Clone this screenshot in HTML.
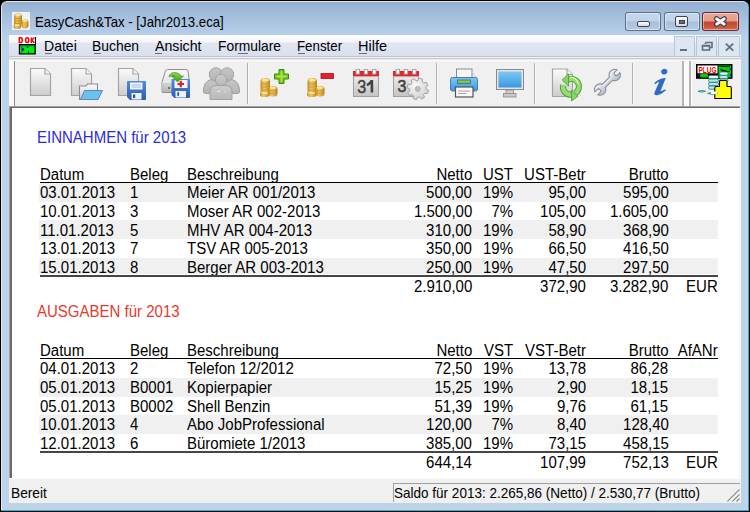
<!DOCTYPE html>
<html><head><meta charset="utf-8">
<style>
html,body{margin:0;padding:0;width:750px;height:512px;overflow:hidden;background:#000;}
body{position:relative;font-family:"Liberation Sans",sans-serif;}
.a{position:absolute;}
.t{position:absolute;white-space:nowrap;line-height:1;}
#teal{position:absolute;left:1px;top:6px;width:748px;height:505px;background:#29b6c9;}
#teal2{position:absolute;left:700px;top:1px;width:49px;height:20px;background:#29b6c9;border-radius:0 6px 0 0;}
#frame{position:absolute;left:1px;top:1px;width:746px;height:508px;border-left:1px solid #e2e9f1;border-top:1px solid #dfe3e8;border-radius:6px 6px 0 0;
 background:linear-gradient(#94b0d1 0px,#a6c0dd 16px,#b6cde7 32px,#bcd3ea 40px,#bcd3ea 100%);}
#menubar{position:absolute;left:9px;top:35px;width:732px;height:21px;background:linear-gradient(#fcfcfe 0,#f4f6fa 7px,#e2e6f2 8px,#dadff0 21px);}
#mbline{position:absolute;left:9px;top:56px;width:732px;height:5px;background:linear-gradient(#bcc2ce 0,#bcc2ce 1px,#f2f2f2 1px,#f2f2f2 2px,#cbcbcb 2px,#cbcbcb 3px,#e6e6e6 3px,#e6e6e6 4px,#fcfcfc 4px);}
#toolbar{position:absolute;left:9px;top:61px;width:732px;height:45px;background:#f0f0f0;}
#tbstrip{position:absolute;left:9px;top:60px;width:5px;height:46px;background:#f9f9f9;}
#grip{position:absolute;left:14px;top:61px;width:1px;height:45px;background:#8a8a8a;}
#content{position:absolute;left:9px;top:106px;width:729px;height:372px;background:#fff;border-left:1px solid #a0a0a0;border-top:1px solid #a0a0a0;border-right:2px solid #f7f7f7;}
#content2{position:absolute;left:10px;top:107px;width:728px;height:371px;border-left:2px solid #6a6a6a;border-top:1px solid #6a6a6a;}
#status{position:absolute;left:9px;top:478px;width:732px;height:24px;background:#f0f0f0;border-top:1px solid #fbfbfb;}
#pane{position:absolute;left:393px;top:483px;width:346px;height:18px;border-left:1px solid #a0a0a0;border-top:1px solid #a0a0a0;}
.sep{position:absolute;top:63px;width:1px;height:41px;background:#b0b0b0;border-right:1px solid #f9f9f9;}
.ln{position:absolute;left:40px;width:678px;height:1px;background:#000;}
.sh{position:absolute;left:39px;width:679px;background:#f0f0f0;}
.cb{position:absolute;top:12px;height:17px;border:1px solid rgba(60,80,110,0.75);border-radius:3px;box-shadow:inset 0 0 0 1px rgba(255,255,255,0.45);
 background:linear-gradient(#c6d7eb 0,#bfd2e8 8px,#a8c0dc 9px,#b4cae4 17px);}
.mdib{position:absolute;top:36px;width:19px;height:19px;border:1px solid #b8c6d6;background:#dde7f3;}
.ui{font-size:13.4px;color:#000;}
</style></head><body>
<div id="teal"></div>
<div id="teal2"></div>
<div id="frame"></div>
<div id="menubar"></div>
<div id="mbline"></div>
<div id="toolbar"></div>
<div id="tbstrip"></div>
<div id="grip"></div>
<div class="sep" style="left:247px"></div>
<div class="sep" style="left:436px"></div>
<div class="sep" style="left:534px"></div>
<div class="sep" style="left:632px"></div>
<div class="a" style="left:682px;top:61px;width:2px;height:45px;background:#b4b4b4;"></div>
<div class="a" style="left:684px;top:61px;width:5px;height:45px;background:#fafafa;"></div>
<div class="a" style="left:689px;top:61px;width:2px;height:45px;background:#b4b4b4;"></div>
<div class="a" style="left:691px;top:61px;width:1px;height:45px;background:#fdfdfd;"></div>
<div id="content"></div>
<div id="content2"></div>
<div id="status"></div>
<div id="pane"></div>
<!-- caption buttons -->
<div class="cb" style="left:625px;width:34px;"></div>
<div class="cb" style="left:664px;width:34px;"></div>
<div class="cb" style="left:702px;width:35px;border-color:rgba(90,30,40,0.9);background:linear-gradient(#eba898 0,#e49a88 8px,#c4452a 9px,#d4664c 17px);"></div>
<div class="a" style="left:637px;top:21px;width:11px;height:4px;background:linear-gradient(#fff,#d8d8d8);border:1px solid #3a4555;border-radius:2px;"></div>
<div class="a" style="left:675px;top:16px;width:11px;height:9px;background:linear-gradient(#fff,#d8d8d8);border:1px solid #3a4555;border-radius:2px;"></div>
<div class="a" style="left:679px;top:20px;width:4px;height:2px;background:#5a7090;border:1px solid #3a4555;"></div>
<svg class="a" style="left:700px;top:10px" width="40" height="24" viewBox="700 10 40 24">
<path d="M716.6 18.8 L724.2 24.2 M724.2 18.8 L716.6 24.2" stroke="#3a3a48" stroke-width="5.2" stroke-linecap="round"/>
<path d="M716.6 18.8 L724.2 24.2 M724.2 18.8 L716.6 24.2" stroke="#f2f2f2" stroke-width="3" stroke-linecap="round"/>
</svg>
<!-- MDI buttons -->
<div class="mdib" style="left:674px;"></div>
<div class="mdib" style="left:696px;"></div>
<div class="mdib" style="left:718px;width:20px;"></div>
<div class="a" style="left:680px;top:49px;width:7px;height:2px;background:#66707c;"></div>
<svg class="a" style="left:700px;top:40px" width="14" height="12" viewBox="0 0 14 12">
<path d="M5.5 2.5 h6.5 v5 h-2 M5.5 4 V2.5" stroke="#66707c" stroke-width="1.6" fill="none"/>
<rect x="2.5" y="5.5" width="7" height="4.5" stroke="#66707c" stroke-width="1.6" fill="none"/>
<rect x="2.5" y="5" width="7" height="1.8" fill="#66707c"/>
</svg>
<svg class="a" style="left:724px;top:42px" width="12" height="10" viewBox="0 0 12 10">
<path d="M1.8 1.6 L9.2 8.6 M9.2 1.6 L1.8 8.6" stroke="#66707c" stroke-width="1.9"/>
</svg>
<div class="a" style="left:45px;top:53px;width:7px;height:1px;background:#6d6d6d"></div>
<div class="a" style="left:94px;top:53px;width:7px;height:1px;background:#6d6d6d"></div>
<div class="a" style="left:155px;top:53px;width:7px;height:1px;background:#6d6d6d"></div>
<div class="a" style="left:238px;top:53px;width:10px;height:1px;background:#6d6d6d"></div>
<div class="a" style="left:298px;top:53px;width:7px;height:1px;background:#6d6d6d"></div>
<div class="a" style="left:359px;top:53px;width:8px;height:1px;background:#6d6d6d"></div>
<div class="t" style="left:35.15px;top:14px;font-size:15.55px;color:#000;transform:scaleX(0.85);transform-origin:0 0;">EasyCash&amp;Tax - [Jahr2013.eca]</div>
<div class="t" style="left:44.03px;top:39px;font-size:14.5px;color:#000;transform:scaleX(0.9688);transform-origin:0 0;">Datei</div>
<div class="t" style="left:92.04px;top:39px;font-size:14.5px;color:#000;transform:scaleX(0.9574);transform-origin:0 0;">Buchen</div>
<div class="t" style="left:155.0px;top:39px;font-size:14.5px;color:#000;transform:scaleX(0.9787);transform-origin:0 0;">Ansicht</div>
<div class="t" style="left:218.05px;top:39px;font-size:14.5px;color:#000;transform:scaleX(0.9538);transform-origin:0 0;">Formulare</div>
<div class="t" style="left:297.08px;top:39px;font-size:14.5px;color:#000;transform:scaleX(0.9167);transform-origin:0 0;">Fenster</div>
<div class="t" style="left:358.0px;top:39px;font-size:14.5px;color:#000;transform:scaleX(1.0);transform-origin:0 0;">Hilfe</div>
<div class="t" style="left:11.05px;top:486px;font-size:14.5px;color:#000;transform:scaleX(0.9459);transform-origin:0 0;">Bereit</div>
<div class="t" style="left:394.07px;top:486px;font-size:14.5px;color:#000;transform:scaleX(0.9325);transform-origin:0 0;">Saldo für 2013: 2.265,86 (Netto) / 2.530,77 (Brutto)</div>
<div class="t" style="left:37px;top:130.46px;font-size:16px;color:#2b2be0;transform:scaleX(0.9375);transform-origin:0 0;">EINNAHMEN für 2013</div>
<div class="t" style="left:40px;top:167.46px;font-size:16px;color:#000;transform:scaleX(0.9375);transform-origin:0 0;">Datum</div>
<div class="t" style="left:130px;top:167.46px;font-size:16px;color:#000;transform:scaleX(0.9375);transform-origin:0 0;">Beleg</div>
<div class="t" style="left:187px;top:167.46px;font-size:16px;color:#000;transform:scaleX(0.9375);transform-origin:0 0;">Beschreibung</div>
<div class="t" style="right:278px;top:167.46px;font-size:16px;color:#000;text-align:right;transform:scaleX(0.9375);transform-origin:100% 0;">Netto</div>
<div class="t" style="right:237px;top:167.46px;font-size:16px;color:#000;text-align:right;transform:scaleX(0.9375);transform-origin:100% 0;">UST</div>
<div class="t" style="right:164px;top:167.46px;font-size:16px;color:#000;text-align:right;transform:scaleX(0.9375);transform-origin:100% 0;">UST-Betr</div>
<div class="t" style="right:81.5px;top:167.46px;font-size:16px;color:#000;text-align:right;transform:scaleX(0.9375);transform-origin:100% 0;">Brutto</div>
<div class="ln" style="top:182px"></div>
<div class="sh" style="top:183px;height:19px"></div>
<div class="t" style="left:40px;top:185.46px;font-size:16px;color:#000;transform:scaleX(0.9375);transform-origin:0 0;">03.01.2013</div>
<div class="t" style="left:130px;top:185.46px;font-size:16px;color:#000;transform:scaleX(0.9375);transform-origin:0 0;">1</div>
<div class="t" style="left:187px;top:185.46px;font-size:16px;color:#000;transform:scaleX(0.9375);transform-origin:0 0;">Meier AR 001/2013</div>
<div class="t" style="right:278px;top:185.46px;font-size:16px;color:#000;text-align:right;transform:scaleX(0.9375);transform-origin:100% 0;">500,00</div>
<div class="t" style="right:237px;top:185.46px;font-size:16px;color:#000;text-align:right;transform:scaleX(0.9375);transform-origin:100% 0;">19%</div>
<div class="t" style="right:164px;top:185.46px;font-size:16px;color:#000;text-align:right;transform:scaleX(0.9375);transform-origin:100% 0;">95,00</div>
<div class="t" style="right:81.5px;top:185.46px;font-size:16px;color:#000;text-align:right;transform:scaleX(0.9375);transform-origin:100% 0;">595,00</div>
<div class="t" style="left:40px;top:204.46px;font-size:16px;color:#000;transform:scaleX(0.9375);transform-origin:0 0;">10.01.2013</div>
<div class="t" style="left:130px;top:204.46px;font-size:16px;color:#000;transform:scaleX(0.9375);transform-origin:0 0;">3</div>
<div class="t" style="left:187px;top:204.46px;font-size:16px;color:#000;transform:scaleX(0.9375);transform-origin:0 0;">Moser AR 002-2013</div>
<div class="t" style="right:278px;top:204.46px;font-size:16px;color:#000;text-align:right;transform:scaleX(0.9375);transform-origin:100% 0;">1.500,00</div>
<div class="t" style="right:237px;top:204.46px;font-size:16px;color:#000;text-align:right;transform:scaleX(0.9375);transform-origin:100% 0;">7%</div>
<div class="t" style="right:164px;top:204.46px;font-size:16px;color:#000;text-align:right;transform:scaleX(0.9375);transform-origin:100% 0;">105,00</div>
<div class="t" style="right:81.5px;top:204.46px;font-size:16px;color:#000;text-align:right;transform:scaleX(0.9375);transform-origin:100% 0;">1.605,00</div>
<div class="sh" style="top:220px;height:19px"></div>
<div class="t" style="left:40px;top:223.46px;font-size:16px;color:#000;transform:scaleX(0.9375);transform-origin:0 0;">11.01.2013</div>
<div class="t" style="left:130px;top:223.46px;font-size:16px;color:#000;transform:scaleX(0.9375);transform-origin:0 0;">5</div>
<div class="t" style="left:187px;top:223.46px;font-size:16px;color:#000;transform:scaleX(0.9375);transform-origin:0 0;">MHV AR 004-2013</div>
<div class="t" style="right:278px;top:223.46px;font-size:16px;color:#000;text-align:right;transform:scaleX(0.9375);transform-origin:100% 0;">310,00</div>
<div class="t" style="right:237px;top:223.46px;font-size:16px;color:#000;text-align:right;transform:scaleX(0.9375);transform-origin:100% 0;">19%</div>
<div class="t" style="right:164px;top:223.46px;font-size:16px;color:#000;text-align:right;transform:scaleX(0.9375);transform-origin:100% 0;">58,90</div>
<div class="t" style="right:81.5px;top:223.46px;font-size:16px;color:#000;text-align:right;transform:scaleX(0.9375);transform-origin:100% 0;">368,90</div>
<div class="t" style="left:40px;top:241.46px;font-size:16px;color:#000;transform:scaleX(0.9375);transform-origin:0 0;">13.01.2013</div>
<div class="t" style="left:130px;top:241.46px;font-size:16px;color:#000;transform:scaleX(0.9375);transform-origin:0 0;">7</div>
<div class="t" style="left:187px;top:241.46px;font-size:16px;color:#000;transform:scaleX(0.9375);transform-origin:0 0;">TSV AR 005-2013</div>
<div class="t" style="right:278px;top:241.46px;font-size:16px;color:#000;text-align:right;transform:scaleX(0.9375);transform-origin:100% 0;">350,00</div>
<div class="t" style="right:237px;top:241.46px;font-size:16px;color:#000;text-align:right;transform:scaleX(0.9375);transform-origin:100% 0;">19%</div>
<div class="t" style="right:164px;top:241.46px;font-size:16px;color:#000;text-align:right;transform:scaleX(0.9375);transform-origin:100% 0;">66,50</div>
<div class="t" style="right:81.5px;top:241.46px;font-size:16px;color:#000;text-align:right;transform:scaleX(0.9375);transform-origin:100% 0;">416,50</div>
<div class="sh" style="top:258px;height:16px"></div>
<div class="t" style="left:40px;top:260.46px;font-size:16px;color:#000;transform:scaleX(0.9375);transform-origin:0 0;">15.01.2013</div>
<div class="t" style="left:130px;top:260.46px;font-size:16px;color:#000;transform:scaleX(0.9375);transform-origin:0 0;">8</div>
<div class="t" style="left:187px;top:260.46px;font-size:16px;color:#000;transform:scaleX(0.9375);transform-origin:0 0;">Berger AR 003-2013</div>
<div class="t" style="right:278px;top:260.46px;font-size:16px;color:#000;text-align:right;transform:scaleX(0.9375);transform-origin:100% 0;">250,00</div>
<div class="t" style="right:237px;top:260.46px;font-size:16px;color:#000;text-align:right;transform:scaleX(0.9375);transform-origin:100% 0;">19%</div>
<div class="t" style="right:164px;top:260.46px;font-size:16px;color:#000;text-align:right;transform:scaleX(0.9375);transform-origin:100% 0;">47,50</div>
<div class="t" style="right:81.5px;top:260.46px;font-size:16px;color:#000;text-align:right;transform:scaleX(0.9375);transform-origin:100% 0;">297,50</div>
<div class="ln" style="top:275px;height:2px;background:#454545"></div>
<div class="t" style="right:278px;top:279.46px;font-size:16px;color:#000;text-align:right;transform:scaleX(0.9375);transform-origin:100% 0;">2.910,00</div>
<div class="t" style="right:164px;top:279.46px;font-size:16px;color:#000;text-align:right;transform:scaleX(0.9375);transform-origin:100% 0;">372,90</div>
<div class="t" style="right:81.5px;top:279.46px;font-size:16px;color:#000;text-align:right;transform:scaleX(0.9375);transform-origin:100% 0;">3.282,90</div>
<div class="t" style="right:32px;top:279.46px;font-size:16px;color:#000;text-align:right;transform:scaleX(0.9375);transform-origin:100% 0;">EUR</div>
<div class="t" style="left:37px;top:304.46px;font-size:16px;color:#e63a2a;transform:scaleX(0.9375);transform-origin:0 0;">AUSGABEN für 2013</div>
<div class="t" style="left:40px;top:343.46px;font-size:16px;color:#000;transform:scaleX(0.9375);transform-origin:0 0;">Datum</div>
<div class="t" style="left:130px;top:343.46px;font-size:16px;color:#000;transform:scaleX(0.9375);transform-origin:0 0;">Beleg</div>
<div class="t" style="left:187px;top:343.46px;font-size:16px;color:#000;transform:scaleX(0.9375);transform-origin:0 0;">Beschreibung</div>
<div class="t" style="right:278px;top:343.46px;font-size:16px;color:#000;text-align:right;transform:scaleX(0.9375);transform-origin:100% 0;">Netto</div>
<div class="t" style="right:237px;top:343.46px;font-size:16px;color:#000;text-align:right;transform:scaleX(0.9375);transform-origin:100% 0;">VST</div>
<div class="t" style="right:164px;top:343.46px;font-size:16px;color:#000;text-align:right;transform:scaleX(0.9375);transform-origin:100% 0;">VST-Betr</div>
<div class="t" style="right:81.5px;top:343.46px;font-size:16px;color:#000;text-align:right;transform:scaleX(0.9375);transform-origin:100% 0;">Brutto</div>
<div class="t" style="right:32px;top:343.46px;font-size:16px;color:#000;text-align:right;transform:scaleX(0.9375);transform-origin:100% 0;">AfANr</div>
<div class="ln" style="top:358px"></div>
<div class="t" style="left:40px;top:361.46px;font-size:16px;color:#000;transform:scaleX(0.9375);transform-origin:0 0;">04.01.2013</div>
<div class="t" style="left:130px;top:361.46px;font-size:16px;color:#000;transform:scaleX(0.9375);transform-origin:0 0;">2</div>
<div class="t" style="left:187px;top:361.46px;font-size:16px;color:#000;transform:scaleX(0.9375);transform-origin:0 0;">Telefon 12/2012</div>
<div class="t" style="right:278px;top:361.46px;font-size:16px;color:#000;text-align:right;transform:scaleX(0.9375);transform-origin:100% 0;">72,50</div>
<div class="t" style="right:237px;top:361.46px;font-size:16px;color:#000;text-align:right;transform:scaleX(0.9375);transform-origin:100% 0;">19%</div>
<div class="t" style="right:164px;top:361.46px;font-size:16px;color:#000;text-align:right;transform:scaleX(0.9375);transform-origin:100% 0;">13,78</div>
<div class="t" style="right:81.5px;top:361.46px;font-size:16px;color:#000;text-align:right;transform:scaleX(0.9375);transform-origin:100% 0;">86,28</div>
<div class="sh" style="top:378px;height:19px"></div>
<div class="t" style="left:40px;top:380.46px;font-size:16px;color:#000;transform:scaleX(0.9375);transform-origin:0 0;">05.01.2013</div>
<div class="t" style="left:130px;top:380.46px;font-size:16px;color:#000;transform:scaleX(0.9375);transform-origin:0 0;">B0001</div>
<div class="t" style="left:187px;top:380.46px;font-size:16px;color:#000;transform:scaleX(0.9375);transform-origin:0 0;">Kopierpapier</div>
<div class="t" style="right:278px;top:380.46px;font-size:16px;color:#000;text-align:right;transform:scaleX(0.9375);transform-origin:100% 0;">15,25</div>
<div class="t" style="right:237px;top:380.46px;font-size:16px;color:#000;text-align:right;transform:scaleX(0.9375);transform-origin:100% 0;">19%</div>
<div class="t" style="right:164px;top:380.46px;font-size:16px;color:#000;text-align:right;transform:scaleX(0.9375);transform-origin:100% 0;">2,90</div>
<div class="t" style="right:81.5px;top:380.46px;font-size:16px;color:#000;text-align:right;transform:scaleX(0.9375);transform-origin:100% 0;">18,15</div>
<div class="t" style="left:40px;top:399.46px;font-size:16px;color:#000;transform:scaleX(0.9375);transform-origin:0 0;">05.01.2013</div>
<div class="t" style="left:130px;top:399.46px;font-size:16px;color:#000;transform:scaleX(0.9375);transform-origin:0 0;">B0002</div>
<div class="t" style="left:187px;top:399.46px;font-size:16px;color:#000;transform:scaleX(0.9375);transform-origin:0 0;">Shell Benzin</div>
<div class="t" style="right:278px;top:399.46px;font-size:16px;color:#000;text-align:right;transform:scaleX(0.9375);transform-origin:100% 0;">51,39</div>
<div class="t" style="right:237px;top:399.46px;font-size:16px;color:#000;text-align:right;transform:scaleX(0.9375);transform-origin:100% 0;">19%</div>
<div class="t" style="right:164px;top:399.46px;font-size:16px;color:#000;text-align:right;transform:scaleX(0.9375);transform-origin:100% 0;">9,76</div>
<div class="t" style="right:81.5px;top:399.46px;font-size:16px;color:#000;text-align:right;transform:scaleX(0.9375);transform-origin:100% 0;">61,15</div>
<div class="sh" style="top:415px;height:19px"></div>
<div class="t" style="left:40px;top:417.46px;font-size:16px;color:#000;transform:scaleX(0.9375);transform-origin:0 0;">10.01.2013</div>
<div class="t" style="left:130px;top:417.46px;font-size:16px;color:#000;transform:scaleX(0.9375);transform-origin:0 0;">4</div>
<div class="t" style="left:187px;top:417.46px;font-size:16px;color:#000;transform:scaleX(0.9375);transform-origin:0 0;">Abo JobProfessional</div>
<div class="t" style="right:278px;top:417.46px;font-size:16px;color:#000;text-align:right;transform:scaleX(0.9375);transform-origin:100% 0;">120,00</div>
<div class="t" style="right:237px;top:417.46px;font-size:16px;color:#000;text-align:right;transform:scaleX(0.9375);transform-origin:100% 0;">7%</div>
<div class="t" style="right:164px;top:417.46px;font-size:16px;color:#000;text-align:right;transform:scaleX(0.9375);transform-origin:100% 0;">8,40</div>
<div class="t" style="right:81.5px;top:417.46px;font-size:16px;color:#000;text-align:right;transform:scaleX(0.9375);transform-origin:100% 0;">128,40</div>
<div class="t" style="left:40px;top:436.46px;font-size:16px;color:#000;transform:scaleX(0.9375);transform-origin:0 0;">12.01.2013</div>
<div class="t" style="left:130px;top:436.46px;font-size:16px;color:#000;transform:scaleX(0.9375);transform-origin:0 0;">6</div>
<div class="t" style="left:187px;top:436.46px;font-size:16px;color:#000;transform:scaleX(0.9375);transform-origin:0 0;">Büromiete 1/2013</div>
<div class="t" style="right:278px;top:436.46px;font-size:16px;color:#000;text-align:right;transform:scaleX(0.9375);transform-origin:100% 0;">385,00</div>
<div class="t" style="right:237px;top:436.46px;font-size:16px;color:#000;text-align:right;transform:scaleX(0.9375);transform-origin:100% 0;">19%</div>
<div class="t" style="right:164px;top:436.46px;font-size:16px;color:#000;text-align:right;transform:scaleX(0.9375);transform-origin:100% 0;">73,15</div>
<div class="t" style="right:81.5px;top:436.46px;font-size:16px;color:#000;text-align:right;transform:scaleX(0.9375);transform-origin:100% 0;">458,15</div>
<div class="ln" style="top:451px;height:2px;background:#454545"></div>
<div class="t" style="right:278px;top:455.46px;font-size:16px;color:#000;text-align:right;transform:scaleX(0.9375);transform-origin:100% 0;">644,14</div>
<div class="t" style="right:164px;top:455.46px;font-size:16px;color:#000;text-align:right;transform:scaleX(0.9375);transform-origin:100% 0;">107,99</div>
<div class="t" style="right:81.5px;top:455.46px;font-size:16px;color:#000;text-align:right;transform:scaleX(0.9375);transform-origin:100% 0;">752,13</div>
<div class="t" style="right:32px;top:455.46px;font-size:16px;color:#000;text-align:right;transform:scaleX(0.9375);transform-origin:100% 0;">EUR</div>
<svg class="a" style="left:724px;top:486px" width="17" height="17" viewBox="724 486 17 17">
<path d="M727.5 501.5 L739.5 489.5 M732.5 501.5 L739.5 494.5 M736.5 501.5 L739.5 498.5" stroke="#8c8c8c" stroke-width="1.3"/>
<path d="M728.5 502 L740 490.5 M733.5 502 L740 495.5" stroke="#ffffff" stroke-width="0.8"/>
</svg>
<svg class="a" style="left:0;top:0" width="750" height="512" viewBox="0 0 750 512">
<defs>
<linearGradient id="gold" x1="0" x2="1" y1="0" y2="0">
<stop offset="0" stop-color="#c08c22"/><stop offset="0.35" stop-color="#eec462"/><stop offset="0.7" stop-color="#dcaa40"/><stop offset="1" stop-color="#b0801c"/>
</linearGradient>
<linearGradient id="doc" x1="0" x2="0" y1="0" y2="1">
<stop offset="0" stop-color="#fbfbfb"/><stop offset="1" stop-color="#cdcdcd"/>
</linearGradient>
<linearGradient id="blue" x1="0" x2="0" y1="0" y2="1">
<stop offset="0" stop-color="#4f8fdc"/><stop offset="1" stop-color="#2a5cb0"/>
</linearGradient>
<linearGradient id="scr" x1="0" x2="0" y1="0" y2="1">
<stop offset="0" stop-color="#7cc8f4"/><stop offset="1" stop-color="#3b98e0"/>
</linearGradient>
<linearGradient id="grn" x1="0" x2="0" y1="0" y2="1">
<stop offset="0" stop-color="#8ee04a"/><stop offset="1" stop-color="#3c9a1c"/>
</linearGradient>
<linearGradient id="calb" x1="0" x2="0" y1="0" y2="1">
<stop offset="0" stop-color="#f2f2f2"/><stop offset="1" stop-color="#c4c4c4"/>
</linearGradient>
<linearGradient id="gray" x1="0" x2="0" y1="0" y2="1">
<stop offset="0" stop-color="#cfcfcf"/><stop offset="1" stop-color="#a8a8a8"/>
</linearGradient>
<linearGradient id="drv" x1="0" x2="0" y1="0" y2="1"><stop offset="0" stop-color="#fafafa"/><stop offset="1" stop-color="#d4d4d4"/></linearGradient>
<linearGradient id="drv2" x1="0" x2="0" y1="0" y2="1"><stop offset="0" stop-color="#d8d8d8"/><stop offset="1" stop-color="#b4b4b4"/></linearGradient>
<linearGradient id="ppl" x1="0" x2="0" y1="0" y2="1"><stop offset="0" stop-color="#c6c6c6"/><stop offset="1" stop-color="#b4b4b4"/></linearGradient>
<linearGradient id="ppl2" x1="0" x2="0" y1="0" y2="1"><stop offset="0" stop-color="#cdcdcd"/><stop offset="1" stop-color="#b8b8b8"/></linearGradient>
<radialGradient id="gearg" cx="0.4" cy="0.35" r="0.7"><stop offset="0" stop-color="#fafafa"/><stop offset="1" stop-color="#cdcdcd"/></radialGradient>
<linearGradient id="wr" x1="0" x2="0" y1="0" y2="1"><stop offset="0" stop-color="#f0f3f8"/><stop offset="1" stop-color="#b4bcc8"/></linearGradient>
</defs>

<!-- title coins icon -->
<rect x="12" y="12" width="18" height="18" fill="#edf3fb"/>
<g>
<rect x="14" y="13.3" width="8" height="13.5" rx="3.5" fill="url(#gold)"/>
<ellipse cx="18" cy="15" rx="3" ry="1.3" fill="#f8e49a"/>
<path d="M15 18.5h6M15 21h6M15 23.5h6" stroke="#c08a20" stroke-width="0.8"/>
<rect x="13.5" y="24" width="7.5" height="5" rx="2.5" fill="url(#gold)"/>
<ellipse cx="17.2" cy="25.3" rx="2.6" ry="1" fill="#f8e49a"/>
<rect x="21.5" y="19.5" width="7" height="9" rx="3.2" fill="url(#gold)"/>
<ellipse cx="25" cy="21" rx="2.6" ry="1.1" fill="#f8e49a"/>
</g>

<!-- DOK icon -->
<rect x="18" y="36.8" width="17.5" height="7.5" fill="#fff"/>
<g stroke="#ff0000" stroke-width="1.5" fill="none">
<path d="M19.3 37.8 V42.6 H20.8 Q22.3 42.6 22.3 40.2 Q22.3 37.8 20.8 37.8 Z"/>
<ellipse cx="27.2" cy="40.2" rx="1.55" ry="2.4"/>
<path d="M31.3 37.5 V42.9 M34.4 37.5 L31.7 40.2 L34.5 42.9"/>
</g>
<rect x="35" y="37" width="1" height="8" fill="#000"/>
<rect x="18.8" y="44" width="17" height="10.5" fill="#000"/>
<rect x="20" y="45.5" width="14.5" height="7.8" fill="#00f000"/>
<rect x="20" y="45.5" width="14.5" height="0.9" fill="#00806a"/>
<path d="M20.5 46.5 L24.2 49.5 L20.5 52.8" stroke="#005a70" stroke-width="1" fill="none"/>
<circle cx="22.6" cy="49.4" r="1.4" fill="#0010c0"/>
<rect x="26.8" y="46.6" width="1.6" height="1.2" fill="#000"/>
<circle cx="28.5" cy="51.2" r="1" fill="#109090"/>
<rect x="28" y="52.2" width="1" height="1.2" fill="#000"/>

<!-- new doc -->
<path d="M30.5 68.5 H45 L50.5 74 V95.5 H30.5 Z" fill="url(#doc)" stroke="#a4a4a8" stroke-width="1.2"/>
<path d="M45 68.5 V74 H50.5" fill="#f4f4f4" stroke="#a4a4a8" stroke-width="1.2"/>

<!-- open -->
<path d="M71.5 68.5 H86 L91.5 74 V95.5 H71.5 Z" fill="url(#doc)" stroke="#a4a4a8" stroke-width="1.2"/>
<path d="M86 68.5 V74 H91.5" fill="#f4f4f4" stroke="#a4a4a8" stroke-width="1.2"/>
<path d="M79.5 99.5 V86 H86 L87.5 84 H97.5 V99.5 Z" fill="url(#doc)" stroke="#8c8c90" stroke-width="1.1"/>
<path d="M80.5 99.5 L84.5 90.5 H102.5 L98 99.5 Z" fill="#6cc0f0" stroke="#5a8ab8" stroke-width="1"/>

<!-- save -->
<path d="M118.5 68.5 H133 L138.5 74 V95.5 H118.5 Z" fill="url(#doc)" stroke="#a4a4a8" stroke-width="1.2"/>
<path d="M133 68.5 V74 H138.5" fill="#f4f4f4" stroke="#a4a4a8" stroke-width="1.2"/>
<path d="M127 82 Q127 81 128 81 H145 Q146 81 146 82 V99 Q146 100 145 100 H130 L127 97 Z" fill="url(#blue)"/>
<rect x="130" y="82.5" width="12.5" height="7" fill="#f0f4fa"/>
<path d="M131.5 85 H141 M131.5 87 H141" stroke="#9ab8dc" stroke-width="0.9"/>
<rect x="131.5" y="93" width="10" height="6.5" fill="#eef2f8"/>
<rect x="133" y="94.5" width="2.2" height="3.5" fill="#2a50a0"/>

<!-- import -->
<path d="M167.5 69.5 H186 Q187.5 69.5 188 71 L189.5 82 V91.5 Q189.5 92.5 188.5 92.5 H163 Q162 92.5 162 91.5 V82 L165.5 71 Q166 69.5 167.5 69.5 Z" fill="url(#drv)" stroke="#8e8e8e" stroke-width="1"/>
<rect x="162.5" y="82" width="26.5" height="10" fill="url(#drv2)"/>
<path d="M162.5 82 H189" stroke="#f4f4f4" stroke-width="1"/>
<rect x="168" y="87" width="2" height="2" fill="#707070"/>
<path d="M171.5 80 Q171.5 79 172.5 79 H189 Q190 79 190 80 V97 Q190 98 189 98 H174.5 L171.5 95 Z" fill="url(#blue)"/>
<rect x="174.5" y="80" width="13" height="8" fill="#f4f6fa"/>
<path d="M180.8 80.8 V87.2 M177.5 84 H184" stroke="#e02020" stroke-width="2.2"/>
<rect x="175.5" y="91" width="10.5" height="6.5" fill="#eef2f8"/>
<rect x="177.3" y="92.3" width="1.8" height="3.5" fill="#2a50a0"/>
<path d="M169 77 Q169.5 72.5 175 72.5 Q179.5 72.8 181 76 L183.5 76 L177.5 82 L171.5 76 L175.2 76 Q174.2 75.3 172.8 75.6 Q170.5 76 169 77 Z" fill="url(#grn)" stroke="#3a8a1a" stroke-width="0.6"/>

<!-- people -->
<g stroke="#a2a2a2" stroke-width="1">
<path d="M203.5 92.5 Q203 81.5 211 79.5 H232 Q240 81.5 239.5 92.5 Q239 93.5 237 93.5 H206 Q203.5 93.5 203.5 92.5 Z" fill="url(#ppl)"/>
<circle cx="216" cy="74.5" r="6.7" fill="url(#ppl)"/>
<circle cx="227" cy="74.5" r="6.7" fill="url(#ppl)"/>
<path d="M210 99.5 V92 Q210 85.5 216.5 85.5 H225.5 Q232 85.5 232 92 V99.5 Z" fill="url(#ppl2)"/>
<circle cx="221" cy="80" r="5.7" fill="url(#ppl2)"/>
</g>
<path d="M217.5 91.5 H220 M224.5 91.5 H225.5" stroke="#f6f6f6" stroke-width="1"/>

<!-- coins plus -->
<g>
<rect x="260.5" y="78" width="9.5" height="16" rx="4" fill="url(#gold)"/>
<ellipse cx="265.2" cy="80" rx="3.6" ry="1.6" fill="#f8e49a"/>
<path d="M261.5 84h7.5M261.5 87h7.5M261.5 90h7.5" stroke="#c8962a" stroke-width="0.7"/>
<rect x="260" y="91.5" width="9.5" height="5.5" rx="2.7" fill="url(#gold)"/>
<ellipse cx="264.7" cy="93" rx="3.4" ry="1.1" fill="#f8e49a"/>
<rect x="268.5" y="86" width="9" height="10.5" rx="3.5" fill="url(#gold)"/>
<ellipse cx="273" cy="87.8" rx="3.3" ry="1.3" fill="#f8e49a"/>
<path d="M269.5 91h7M269.5 93.5h7" stroke="#c8962a" stroke-width="0.7"/>
</g>
<path d="M279 69.5 H284 V74 H288.5 V79 H284 V83.5 H279 V79 H274.5 V74 H279 Z" fill="#78c81e" stroke="#3a8a10" stroke-width="1"/>
<path d="M281.5 71.5 V81.5 M276.5 76.5 H286.5" stroke="#b4e83c" stroke-width="1.6"/>

<!-- coins minus -->
<g>
<rect x="307.5" y="78" width="9.5" height="16" rx="4" fill="url(#gold)"/>
<ellipse cx="312.2" cy="80" rx="3.6" ry="1.6" fill="#f8e49a"/>
<path d="M308.5 84h7.5M308.5 87h7.5M308.5 90h7.5" stroke="#c8962a" stroke-width="0.7"/>
<rect x="307" y="91.5" width="9.5" height="5.5" rx="2.7" fill="url(#gold)"/>
<ellipse cx="311.7" cy="93" rx="3.4" ry="1.1" fill="#f8e49a"/>
<rect x="315.5" y="86" width="9" height="10.5" rx="3.5" fill="url(#gold)"/>
<ellipse cx="320" cy="87.8" rx="3.3" ry="1.3" fill="#f8e49a"/>
<path d="M316.5 91h7M316.5 93.5h7" stroke="#c8962a" stroke-width="0.7"/>
</g>
<rect x="321" y="73.5" width="12.5" height="5" fill="#e8202a" stroke="#b01018" stroke-width="0.8"/>

<!-- calendar 31 -->
<rect x="353.5" y="71.5" width="25" height="25" fill="url(#calb)" stroke="#a0a0a0" stroke-width="1"/>
<rect x="353" y="71" width="26" height="5.8" fill="#e4262c"/>
<rect x="353" y="76.3" width="26" height="0.8" fill="#c8c8c8"/>
<rect x="356" y="69.5" width="3.6" height="4.6" fill="#f4f4f4" stroke="#9a9a9a" stroke-width="0.8"/>
<rect x="364.2" y="69.5" width="3.6" height="4.6" fill="#f4f4f4" stroke="#9a9a9a" stroke-width="0.8"/>
<rect x="372.4" y="69.5" width="3.6" height="4.6" fill="#f4f4f4" stroke="#9a9a9a" stroke-width="0.8"/>
<text x="357.3" y="92.6" font-family="Liberation Sans" font-size="17.5" fill="#424242" stroke="#424242" stroke-width="0.45" textLength="9" lengthAdjust="spacingAndGlyphs">3</text>
<path d="M370.6 80 H373.2 V92.6 H370.6 V84.2 Q369 85.6 366.8 86.2 V83.8 Q369.4 82.6 370.6 80 Z" fill="#424242"/>

<!-- calendar gear -->
<rect x="393.5" y="71.5" width="25" height="25" fill="url(#calb)" stroke="#a0a0a0" stroke-width="1"/>
<rect x="393" y="71" width="26" height="5.8" fill="#e4262c"/>
<rect x="393" y="76.3" width="26" height="0.8" fill="#c8c8c8"/>
<rect x="396" y="69.5" width="3.6" height="4.6" fill="#f4f4f4" stroke="#9a9a9a" stroke-width="0.8"/>
<rect x="404.2" y="69.5" width="3.6" height="4.6" fill="#f4f4f4" stroke="#9a9a9a" stroke-width="0.8"/>
<rect x="412.4" y="69.5" width="3.6" height="4.6" fill="#f4f4f4" stroke="#9a9a9a" stroke-width="0.8"/>
<text x="397.5" y="92" font-family="Liberation Sans" font-size="16" fill="#404040" stroke="#404040" stroke-width="0.5">3</text>
<path d="M417.80 80.70 L419.07 78.17 L422.48 79.16 L422.19 81.98 L423.60 83.10 L426.28 82.21 L427.99 85.32 L425.80 87.11 L426.00 88.90 L428.53 90.17 L427.54 93.58 L424.72 93.29 L423.60 94.70 L424.49 97.38 L421.38 99.09 L419.59 96.90 L417.80 97.10 L416.53 99.63 L413.12 98.64 L413.41 95.82 L412.00 94.70 L409.32 95.59 L407.61 92.48 L409.80 90.69 L409.60 88.90 L407.07 87.63 L408.06 84.22 L410.88 84.51 L412.00 83.10 L411.11 80.42 L414.22 78.71 L416.01 80.90 Z" fill="url(#gearg)" stroke="#a4a4a4" stroke-width="1"/>
<circle cx="417.8" cy="88.9" r="2.6" fill="#bcbcbc" stroke="#a8a8a8" stroke-width="0.6"/>

<!-- printer -->
<rect x="456.5" y="69" width="15.5" height="9" fill="#f6f6f6" stroke="#8a8a8a" stroke-width="1"/>
<path d="M472 72 L476 77" stroke="#c8c8c8" stroke-width="1"/>
<rect x="450.5" y="77.5" width="27" height="13.5" rx="2" fill="url(#scr)" stroke="#4a7ab0" stroke-width="1"/>
<rect x="457.5" y="80" width="13" height="3.5" fill="#8ac832" stroke="#2f6aa8" stroke-width="0.8"/>
<rect x="455.5" y="87" width="17.5" height="10" fill="#f8f8f8" stroke="#555" stroke-width="1.2"/>
<path d="M458 91 H470 M458 93.5 H466" stroke="#9a9a9a" stroke-width="0.9"/>

<!-- monitor -->
<rect x="496.5" y="69.5" width="27" height="20" fill="#e4e4e4" stroke="#8a8a8a" stroke-width="1"/>
<rect x="498.5" y="71.5" width="23" height="16" fill="url(#scr)"/>
<rect x="506" y="90" width="7.5" height="4" fill="#cfcfcf" stroke="#8a8a8a" stroke-width="0.8"/>
<rect x="503.5" y="93.5" width="12.5" height="3.5" fill="#c8c8c8" stroke="#8a8a8a" stroke-width="0.8"/>

<!-- refresh doc -->
<path d="M552.5 69 H567 L572.5 74.5 V96.5 H552.5 Z" fill="url(#doc)" stroke="#a4a4a8" stroke-width="1.2"/>
<path d="M567 69 V74.5 H572.5" fill="#f4f4f4" stroke="#a4a4a8" stroke-width="1.2"/>
<g fill="none" stroke-linecap="butt">
<path d="M567.5 79.8 A7.6 7.6 0 1 1 575 93.3" stroke="#4aa82c" stroke-width="6.2"/>
<path d="M563.2 85.2 A7.6 7.6 0 0 0 572 94.5" stroke="#4aa82c" stroke-width="6.2"/>
<path d="M567.5 79.8 A7.6 7.6 0 1 1 575 93.3" stroke="#9ad878" stroke-width="4.2"/>
<path d="M563.2 85.2 A7.6 7.6 0 0 0 572 94.5" stroke="#9ad878" stroke-width="4.2"/>
</g>
<path d="M562.3 80 L568.5 73.8 V86.2 Z" fill="#8cd26a" stroke="#4aa82c" stroke-width="0.9"/>
<path d="M578 96.2 L571.5 90.2 V101 Z" fill="#8cd26a" stroke="#4aa82c" stroke-width="0.9"/>
<path d="M570 77 Q576 77 578.5 84" stroke="#d8f4c0" stroke-width="1.2" fill="none"/>

<!-- wrench -->
<g transform="translate(607.4 82.3) rotate(-45) scale(0.94)">
<path d="M5.5 -2.4 A6 6 0 0 1 16.58 -2.2 L13.2 -2.2 A2.2 2.2 0 0 0 13.2 2.2 L16.58 2.2 A6 6 0 0 1 5.5 2.4 L-5.5 2.4 A6 6 0 0 1 -16.58 2.2 L-13.2 2.2 A2.2 2.2 0 0 0 -13.2 -2.2 L-16.58 -2.2 A6 6 0 0 1 -5.5 -2.4 Z" fill="url(#wr)" stroke="#868c96" stroke-width="1.1"/>
<path d="M-6 -0.6 H6" stroke="#f8fafc" stroke-width="1"/>
</g>

<!-- info -->
<ellipse cx="664.3" cy="71.6" rx="3.1" ry="2.8" transform="rotate(-20 664.3 71.6)" fill="#2f6ac4"/>
<path d="M654.3 83 Q656.5 80.5 661 78.8 Q663.5 77.9 665.8 78 L660.3 91.3 Q662.8 90.6 665.5 89.2 L665.9 90.6 Q661.5 94.5 657 95.2 Q654.5 95.5 654.3 93.8 Q654.3 93 654.8 91.8 L659.3 81.8 Q657 82.6 655 84.2 Z" fill="#2f6ac4"/>

<!-- plug -->
<rect x="696" y="64" width="36.5" height="14.8" fill="#000"/>
<rect x="697.5" y="65.5" width="20" height="7.8" fill="#fff"/>
<text x="707.5" y="72.6" font-family="Liberation Sans" font-weight="bold" font-size="8.6" fill="#ff0000" text-anchor="middle" textLength="18" lengthAdjust="spacingAndGlyphs">PLUG</text>
<rect x="718.5" y="65.5" width="12.5" height="11.8" fill="#00d000"/>
<path d="M719.5 66.5 H730 M720 69 L722.5 71.5 H730 M719 74 H724" stroke="#003000" stroke-width="0.9"/>
<circle cx="730.5" cy="69" r="0.9" fill="#1020d0"/><circle cx="730.5" cy="75" r="0.9" fill="#1020d0"/>
<rect x="700" y="73.8" width="8" height="3.6" rx="1.5" fill="#00d400"/>
<circle cx="698.5" cy="75.5" r="0.9" fill="#1020d0"/>
<g stroke="#1e8c8c" stroke-width="0.9">
<rect x="708.5" y="75.5" width="10" height="3.2" rx="1.6" fill="#f4f8f8"/>
<rect x="708.5" y="79" width="10" height="3.2" rx="1.6" fill="#c8e4e4"/>
<rect x="708.5" y="82.5" width="10" height="3.2" rx="1.6" fill="#c8e4e4"/>
<rect x="708.5" y="86" width="10" height="3.2" rx="1.6" fill="#c8e4e4"/>
<rect x="719.5" y="72" width="8.5" height="3.2" rx="1.6" fill="#f4f8f8"/>
<rect x="719.5" y="75.5" width="8.5" height="3.2" rx="1.6" fill="#c8e4e4"/>
<rect x="719.5" y="79" width="8.5" height="3.2" rx="1.6" fill="#c8e4e4"/>
</g>
<path d="M714.8 98.5 V88 Q714.8 86.5 716.3 86.5 H719.5 V81.5 Q719.5 80.5 720.5 80.5 H726 Q727 80.5 727 81.5 V86.5 H730 Q731.3 86.5 731.3 88 V98.5 Z" fill="#ffff00" stroke="#000" stroke-width="1.1"/>
<path d="M698 91.3 Q701.5 89.5 705.5 91.3 Q701.5 93 698 91.3 Z M707.5 93.4 Q712.5 91.5 717.5 93.4 Q712.5 95.3 707.5 93.4 Z" fill="#b8e0e0" stroke="#1e8c8c" stroke-width="0.9"/>
<rect x="711" y="91.5" width="6" height="2.5" fill="#fff"/>
</svg>

</body></html>
